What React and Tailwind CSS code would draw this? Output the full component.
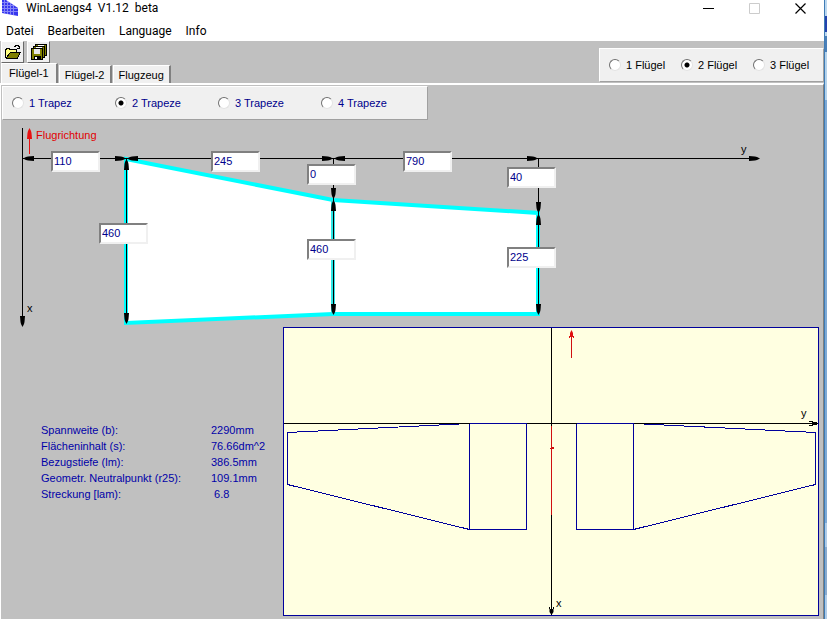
import { useState } from 'react';

const menuItems = ['Datei', 'Bearbeiten', 'Language', 'Info'];
const tabs = ['Flügel-1', 'Flügel-2', 'Flugzeug'];

const results = [
  { label: 'Spannweite (b):', value: '2290mm' },
  { label: 'Flächeninhalt (s):', value: '76.66dm^2' },
  { label: 'Bezugstiefe (lm):', value: '386.5mm' },
  { label: 'Geometr. Neutralpunkt (r25):', value: '109.1mm' },
  { label: 'Streckung [lam):', value: '\u00a06.8' },
];

// Dimension boxes lying on the wing sketch
const dimensions = [
  { id: 'offset', label: 'Abstand Rumpf', value: '110', pos: 'left-[50px] top-[31px]' },
  { id: 'span1', label: 'Spannweite Trapez 1', value: '245', pos: 'left-[210px] top-[31px]' },
  { id: 'span2', label: 'Spannweite Trapez 2', value: '790', pos: 'left-[402px] top-[31px]' },
  { id: 'sweep1', label: 'Pfeilung Trapez 1', value: '0', pos: 'left-[306px] top-[44px]' },
  { id: 'sweep2', label: 'Pfeilung Trapez 2', value: '40', pos: 'left-[506px] top-[47px]' },
  { id: 'chord0', label: 'Tiefe innen', value: '460', pos: 'left-[98px] top-[103px]' },
  { id: 'chord1', label: 'Tiefe Mitte', value: '460', pos: 'left-[306px] top-[119px]' },
  { id: 'chord2', label: 'Tiefe außen', value: '225', pos: 'left-[506px] top-[127px]' },
];

const rotation = { right: 0, down: 90, left: 180, up: 270 };

function Arrow({ x, y, dir, color = 'black' }) {
  return (
    <path
      d="M0 0 L-3 -1.5 L-5 -2 L-11 -2.5 L-11 2.5 L-5 2 L-3 1.5 Z"
      fill={color}
      transform={`translate(${x} ${y}) rotate(${rotation[dir]})`}
    />
  );
}

function AppIcon() {
  return (
    <svg className="w-4 h-4" viewBox="0 0 16 16" aria-hidden="true">
      <clipPath id="wing">
        <path d="M0 0 H4 L16 8 V16 L0 13 Z" />
      </clipPath>
      <g clipPath="url(#wing)">
        <rect width="16" height="16" fill="#3838ee" />
        <path d="M0 2.5 H16 M0 5.5 H16 M0 8.5 H16 M0 11.5 H16 M2.5 0 V16 M5.5 0 V16 M8.5 0 V16 M11.5 0 V16" stroke="#a9a9fa" opacity="0.7" />
      </g>
    </svg>
  );
}

function OpenIcon() {
  return (
    <svg className="w-4 h-4" viewBox="0 0 16 16" shapeRendering="crispEdges" aria-hidden="true">
      <path d="M1 5 H2 V4 H5 V5 H11 V8 H5 L1 13 Z" fill="#ffff80" />
      <path d="M1 14 L5 8 H16 L12 14 Z" fill="#808000" />
      <path d="M0.5 14 V5.5 H1.5 V4.5 H4.5 V5.5 H11.5 V8 M1 14.5 H12 L15.5 8.5 H5.5 L1 14" fill="none" stroke="black" />
      <path d="M9 2.5 H10 V1.5 H13 V2.5 H14 V4 M12 4.5 H15 M14.5 2 V5" fill="none" stroke="black" />
    </svg>
  );
}

function SaveAllIcon() {
  return (
    <svg className="w-4 h-4" viewBox="0 0 16 16" shapeRendering="crispEdges" aria-hidden="true">
      <rect x="4.5" y="0.5" width="11" height="11" fill="#808000" stroke="black" />
      <rect x="7" y="1" width="6" height="2" fill="white" />
      <rect x="2.5" y="2.5" width="11" height="11" fill="#808000" stroke="black" />
      <rect x="5" y="3" width="6" height="2" fill="white" />
      <rect x="0.5" y="4.5" width="11" height="11" fill="#808000" stroke="black" />
      <rect x="3" y="5" width="6" height="5" fill="#e8e8e8" />
      <rect x="3" y="12" width="7" height="4" fill="black" />
      <rect x="4" y="13" width="2" height="2" fill="white" />
    </svg>
  );
}

function ToolButton({ label, children }) {
  return (
    <button
      aria-label={label}
      className="flex items-center justify-center w-[23px] h-[22px] bg-[#f0f0f0] border border-t-white border-l-white border-r-[#696969] border-b-[#696969]"
    >
      {children}
    </button>
  );
}

function RadioRow({ name, options, value, onChange, columns, color }) {
  return (
    <div role="radiogroup" aria-label={name} className={`grid ${columns} ${color} items-center h-[34px] pl-[9px] pb-px bg-[#f0f0f0] border border-t-white border-l-white border-r-[#a0a0a0] border-b-[#a0a0a0]`}>
      {options.map(opt => (
        <label key={opt} className="flex items-center gap-[5px] whitespace-nowrap">
          <input
            type="radio"
            name={name}
            checked={value === opt}
            onChange={() => onChange(opt)}
            className="appearance-none size-3 rounded-full bg-white border border-t-[#707070] border-l-[#707070] border-r-[#e3e3e3] border-b-[#e3e3e3] checked:bg-[radial-gradient(circle,black_2px,white_3px)]"
          />
          {opt}
        </label>
      ))}
    </div>
  );
}

function WingSketch() {
  const [values, setValues] = useState(() => Object.fromEntries(dimensions.map(d => [d.id, d.value])));

  return (
    <div className="relative h-[207px]">
      <svg className="block w-[780px] h-[207px]" viewBox="1 120 780 207" role="img" aria-label="Flügelgrundriss">
        <polygon points="126,159 333,200 538,213 538,314 333,314 126,323" fill="white" stroke="#00ffff" strokeWidth="4" />
        <path d="M333 200 V314" stroke="#2ee6e6" strokeWidth="4" />
        <path d="M22.5 128 V326 M23 158.5 H759 M126.5 159 V323 M333.5 158 V314 M538.5 158 V314" fill="none" stroke="black" shapeRendering="crispEdges" />
        <Arrow x={23} y={158.5} dir="left" />
        <Arrow x={126} y={158.5} dir="right" />
        <Arrow x={127} y={158.5} dir="left" />
        <Arrow x={333} y={158.5} dir="right" />
        <Arrow x={334} y={158.5} dir="left" />
        <Arrow x={538} y={158.5} dir="right" />
        <Arrow x={760} y={158.5} dir="right" />
        <Arrow x={22.5} y={327} dir="down" />
        <Arrow x={126.5} y={159} dir="up" />
        <Arrow x={126.5} y={324} dir="down" />
        <Arrow x={333.5} y={199} dir="down" />
        <Arrow x={333.5} y={200} dir="up" />
        <Arrow x={333.5} y={315} dir="down" />
        <Arrow x={538.5} y={213} dir="down" />
        <Arrow x={538.5} y={214} dir="up" />
        <Arrow x={538.5} y={315} dir="down" />
        <path d="M29.5 130 V154" stroke="#e81010" shapeRendering="crispEdges" />
        <Arrow x={29.5} y={128} dir="up" color="#e81010" />
        <text x="36" y="139" fontSize="11" fill="#e00000">Flugrichtung</text>
        <text x="741" y="153" fontSize="11">y</text>
        <text x="27" y="312" fontSize="11">x</text>
      </svg>
      {dimensions.map(d => (
        <input
          key={d.id}
          type="text"
          aria-label={d.label}
          value={values[d.id]}
          onChange={e => setValues({ ...values, [d.id]: e.target.value })}
          className={`absolute ${d.pos} w-[49px] h-[21px] pl-px pb-px bg-white text-[#00008c] border-2 border-t-[#808080] border-l-[#808080] border-r-[#f0f0f0] border-b-[#f0f0f0] outline-none`}
        />
      ))}
    </div>
  );
}

function PlaneView() {
  return (
    <svg className="block w-full h-auto" viewBox="283 327 536 289" role="img" aria-label="Draufsicht">
      <rect x="283.5" y="327.5" width="535" height="288" fill="#ffffe1" stroke="#00009c" />
      <g fill="none" shapeRendering="crispEdges">
        <g stroke="#00009c">
          <path d="M526.5 423.5 V529.5 H469.5 L287.5 484.5 V432.5 L469.5 423.5 V529.5" />
          <path d="M576.5 423.5 V529.5 H633.5 L815.5 484.5 V432.5 L633.5 423.5 V529.5" />
        </g>
        <path d="M551.5 328 V426 M551.5 515 V615 M284 423.5 H818" stroke="black" />
        <path d="M469.5 423.5 H526.5 M576.5 423.5 H633.5" stroke="#00009c" />
        <path d="M551.5 426 V515 M571.5 332 V358" stroke="#d01010" />
        <path d="M569.5 338 V336 M573.5 338 V336 M570 334.5 H573" stroke="#e01010" />
        <path d="M549.5 607 V609 M553.5 607 V609 M550 610.5 H553 M550 612.5 H553" stroke="black" />
        <path d="M809 421.5 H813 M809 425.5 H813 M812 422.5 H817 M812 424.5 H817" stroke="black" />
      </g>
      <path d="M550 448 H552 V447 H554 V449 H552 V449 H550 Z" fill="#d01010" />
      <path d="M571.5 330 L573 333 V337 H570 V333 Z" fill="#e01010" />
      <path d="M551.5 615 L553.5 612 V609 H549.5 V612 Z" fill="black" />
      <text x="801" y="417" fontSize="11">y</text>
      <text x="556" y="607" fontSize="11">x</text>
    </svg>
  );
}

// Sliver of the desktop visible beside the window
function DesktopEdge() {
  return (
    <div className="flex flex-col w-[3px] shrink-0 border-l border-[#3f7cb5] bg-[#7faad6]">
      <div className="h-4 bg-[#bcd8f0]" />
      <div className="h-4 bg-[#2343ae]" />
      <div className="h-1 bg-[#bcd8f0]" />
      <div className="h-4 bg-[#4a7fb8]" />
      <div className="h-12 bg-[#b5d3ec]" />
      <div className="grow bg-[#7faad6]" />
      <div className="h-6 bg-[#b0cce8]" />
      <div className="h-12 bg-[#8aabcf]" />
      <div className="h-6 bg-[#b0cce8]" />
    </div>
  );
}

export default function App() {
  const [tab, setTab] = useState('Flügel-1');
  const [trapez, setTrapez] = useState('2 Trapeze');
  const [wings, setWings] = useState('2 Flügel');

  return (
    <div className="flex min-h-screen bg-[#c0c0c0] text-black text-[11px] leading-4 font-['Liberation_Sans',Arial,sans-serif]">
      <div className="flex flex-col flex-1 min-w-0">
        <header className="bg-white text-xs font-[Roboto,'Segoe_UI',sans-serif]">
          <div className="flex items-center h-5 pl-[2px] pb-1">
            <AppIcon />
            <h1 className="ml-2 whitespace-pre">WinLaengs4  V1.12  beta</h1>
            <div className="flex items-center gap-[35px] ml-auto pr-[18px]">
              <button aria-label="Minimieren">
                <svg className="size-[11px]" viewBox="0 0 11 11"><path d="M0 5.5 H11" stroke="black" /></svg>
              </button>
              <button aria-label="Maximieren" disabled>
                <svg className="size-[11px]" viewBox="0 0 11 11"><path d="M0.5 0.5 H10.5 V10.5 H0.5 Z" fill="none" stroke="#cccccc" /></svg>
              </button>
              <button aria-label="Schließen">
                <svg className="size-[11px]" viewBox="0 0 11 11"><path d="M0.5 0.5 L10.5 10.5 M10.5 0.5 L0.5 10.5" stroke="black" strokeWidth="1.2" /></svg>
              </button>
            </div>
          </div>
          <nav className="flex items-center gap-[14px] h-[21px] pl-[6px]">
            {menuItems.map(item => (
              <button key={item}>{item}</button>
            ))}
          </nav>
        </header>

        <div className="flex justify-between h-[42px]">
          <div className="flex flex-col justify-between pl-px">
            <div className="flex gap-[3px]">
              <ToolButton label="Öffnen"><OpenIcon /></ToolButton>
              <ToolButton label="Alles speichern"><SaveAllIcon /></ToolButton>
            </div>
            <div role="tablist" className="flex items-end gap-px">
              {tabs.map(t => (
                <button
                  key={t}
                  role="tab"
                  aria-selected={tab === t}
                  onClick={() => setTab(t)}
                  className={`bg-[#f0f0f0] border-t border-l border-r-2 border-t-white border-l-white border-r-[#808080] ${tab === t ? 'h-5 pb-[2px] px-[7px]' : 'h-[18px] px-[5px]'}`}
                >
                  {t}
                </button>
              ))}
            </div>
          </div>
          <div className="mt-[7px]">
            <RadioRow name="Anzahl Flügel" options={['1 Flügel', '2 Flügel', '3 Flügel']} value={wings} onChange={setWings} columns="grid-cols-[72px_72px_70px]" color="text-black" />
          </div>
        </div>

        <main className="flex-1 border-t-2 border-l border-r border-t-white border-l-white border-r-[#808080]">
          <div className="flex pt-px pl-px">
            <RadioRow name="Anzahl Trapeze" options={['1 Trapez', '2 Trapeze', '3 Trapeze', '4 Trapeze']} value={trapez} onChange={setTrapez} columns="grid-cols-[103px_103px_103px_106px]" color="text-[#00008c]" />
          </div>
          <WingSketch />
          <div className="flex pr-1">
            <table className="w-[242px] ml-10 mt-[95px] self-start shrink-0 text-[#0000a8] text-left">
              <tbody>
                {results.map(r => (
                  <tr key={r.label}>
                    <th scope="row" className="w-[170px] p-0 font-normal whitespace-nowrap">{r.label}</th>
                    <td className="p-0 whitespace-nowrap">{r.value}</td>
                  </tr>
                ))}
              </tbody>
            </table>
            <div className="flex-1 min-w-0">
              <PlaneView />
            </div>
          </div>
        </main>
      </div>
      <DesktopEdge />
    </div>
  );
}
